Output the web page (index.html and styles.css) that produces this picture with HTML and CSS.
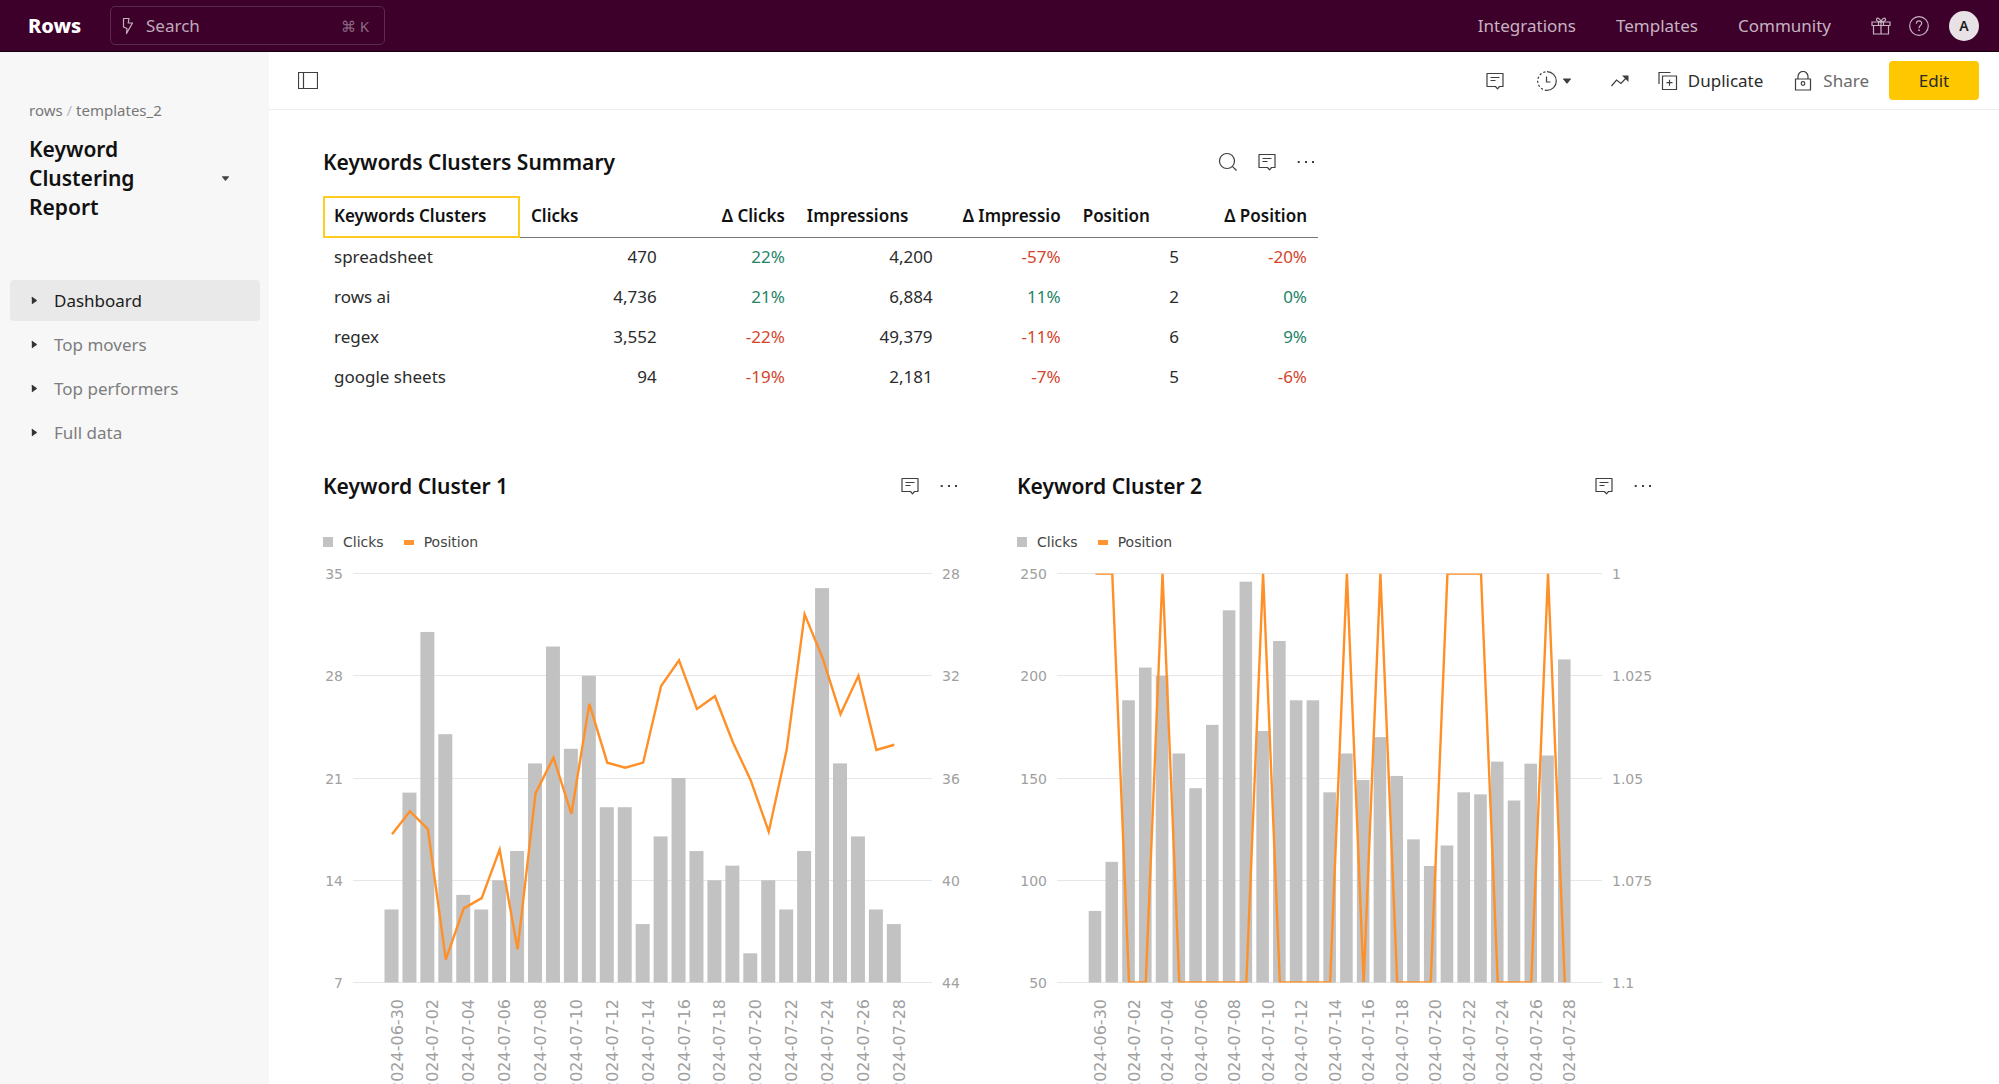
FILE: index.html
```html
<!DOCTYPE html>
<html lang="en">
<head>
<meta charset="utf-8">
<meta name="viewport" content="width=device-width, initial-scale=1">
<title>Keyword Clustering Report - Rows</title>
<link rel="stylesheet" href="styles.css">
</head>
<body>
<svg class="sprite" aria-hidden="true">
  <symbol id="i-comment" viewBox="0 0 20 20"><path d="M2 2.5h16v13h-3.500l-2 2.300-2-2.300H2z" stroke-linejoin="round"/><path d="M5.500 6.500h9M5.500 9.500h5"/></symbol>
  <symbol id="i-dots" viewBox="0 0 20 20"><path class="solid" d="M1.700 9h2v2h-2zM9 9h2v2H9zM16 9h2v2h-2z"/></symbol>
  <symbol id="i-search" viewBox="0 0 20 20"><circle cx="9" cy="9" r="7.500"/><path d="M14.300 14.300l4.200 4.200"/></symbol>
  <symbol id="i-down" viewBox="0 0 10 10"><path class="solid" d="M1.500 2.500h7q.8 0 .3.800L5.600 7.300q-.6.600-1.200 0L1.200 3.300q-.5-.8.300-.8z"/></symbol>
  <symbol id="i-right" viewBox="0 0 10 10"><path class="solid" d="M2 1.500v7q0 .8.700.4L7.400 5.500q.5-.5 0-1L2.700 1.100Q2 .7 2 1.500z"/></symbol>
</svg>

<header class="topbar">
  <a class="logo" href="#">Rows</a>
  <label class="search">
    <svg class="bolt" viewBox="0 0 12 18"><path d="M1.500 1.500h5.500L6.200 6h4.300L4.500 16.500 5 11.500 1.500 10z" stroke-linejoin="round"/></svg>
    <input type="search" placeholder="Search" aria-label="Search">
    <span class="shortcut">⌘ K</span>
  </label>
  <nav class="toplinks">
    <a href="#">Integrations</a>
    <a href="#">Templates</a>
    <a href="#">Community</a>
  </nav>
  <div class="account">
    <button class="icon-btn" aria-label="What's new"><svg viewBox="0 0 20 20"><path d="M1 6h18v3.500H1zM2.500 9.500V18h15V9.500M10 6v12M7.500 6v3.500M12.500 6v3.500"/><path d="M10 6C9 2 5.500 1 5.500 3.500c0 1.500 2 2.200 4.500 2.500 2.500-.3 4.500-1 4.500-2.500C14.500 1 11 2 10 6z"/></svg></button>
    <button class="icon-btn" aria-label="Help"><svg viewBox="0 0 20 20"><circle cx="10" cy="10" r="9.300"/><path d="M7.300 7.800C7.300 3.700 13 4.200 12.700 7.500c-.2 2-2.700 2-2.700 4.700"/><path class="solid" d="M9.200 13.500h1.600v1.600H9.200z"/></svg></button>
    <button class="avatar" aria-label="Account">A</button>
  </div>
</header>

<div class="app">
  <aside class="sidebar">
    <p class="crumbs"><a href="#">rows</a> <span>/</span> <a href="#">templates_2</a></p>
    <div class="report">
      <h1>Keyword Clustering Report</h1>
      <button class="caret-btn" aria-label="Report menu"><svg><use href="#i-down"/></svg></button>
    </div>
    <nav class="pages">
      <a class="current" href="#"><svg><use href="#i-right"/></svg>Dashboard</a>
      <a href="#"><svg><use href="#i-right"/></svg>Top movers</a>
      <a href="#"><svg><use href="#i-right"/></svg>Top performers</a>
      <a href="#"><svg><use href="#i-right"/></svg>Full data</a>
    </nav>
  </aside>

  <main class="main">
    <div class="toolbar">
      <button class="icon-btn" aria-label="Toggle sidebar"><svg viewBox="0 0 20 20"><path d="M.5 1.500h19v16H.5zM5.500 1.500v16"/></svg></button>
      <div class="actions">
        <button class="icon-btn" aria-label="Comments"><svg><use href="#i-comment"/></svg></button>
        <button class="history" aria-label="Version history"><svg viewBox="0 0 20 20"><path d="M10 .7a9.300 9.300 0 0 1 0 18.600"/><path d="M10 19.300A9.300 9.300 0 0 1 10 .7" stroke-dasharray="2.200 2"/><path d="M9.500 5.500v5.500h4"/></svg><svg class="caret"><use href="#i-down"/></svg></button>
        <button class="icon-btn trend" aria-label="Insights"><svg viewBox="0 0 20 20"><path d="M1.500 15l5-6 4.500 3.500L17 6"/><path class="solid" d="M12 4.500h6.500V11z"/></svg></button>
        <button class="text-btn"><svg viewBox="0 0 20 20"><path d="M1 13V1.500h11.500"/><path d="M4.500 5h14v13.500h-14zM11.500 8.700v6M8.500 11.700h6"/></svg>Duplicate</button>
        <button class="text-btn share"><svg viewBox="0 0 20 20"><path d="M2.500 8h15v11h-15zM5 8V5.500a5 5 0 0 1 10 0V8"/><circle cx="10" cy="12.500" r="1.800"/></svg>Share</button>
        <button class="edit">Edit</button>
      </div>
    </div>

    <div class="canvas">
      <section class="widget summary">
        <div class="widget-head">
          <h2>Keywords Clusters Summary</h2>
          <button class="icon-btn" aria-label="Search table"><svg><use href="#i-search"/></svg></button>
          <button class="icon-btn" aria-label="Comment"><svg><use href="#i-comment"/></svg></button>
          <button class="icon-btn" aria-label="More"><svg><use href="#i-dots"/></svg></button>
        </div>
        <table>
          <colgroup><col class="c-name"><col class="c-val"><col class="c-delta"><col class="c-val"><col class="c-delta"><col class="c-pos"><col class="c-delta"></colgroup>
          <thead>
            <tr><th class="selected">Keywords Clusters</th><th>Clicks</th><th class="num">Δ Clicks</th><th>Impressions</th><th class="num">Δ Impressio</th><th>Position</th><th class="num">Δ Position</th></tr>
          </thead>
          <tbody>
            <tr><td>spreadsheet</td><td class="num">470</td><td class="num up">22%</td><td class="num">4,200</td><td class="num down">-57%</td><td class="num">5</td><td class="num down">-20%</td></tr>
            <tr><td>rows ai</td><td class="num">4,736</td><td class="num up">21%</td><td class="num">6,884</td><td class="num up">11%</td><td class="num">2</td><td class="num up">0%</td></tr>
            <tr><td>regex</td><td class="num">3,552</td><td class="num down">-22%</td><td class="num">49,379</td><td class="num down">-11%</td><td class="num">6</td><td class="num up">9%</td></tr>
            <tr><td>google sheets</td><td class="num">94</td><td class="num down">-19%</td><td class="num">2,181</td><td class="num down">-7%</td><td class="num">5</td><td class="num down">-6%</td></tr>
          </tbody>
        </table>
      </section>

      <div class="charts">
        <section class="widget">
          <div class="widget-head">
            <h2>Keyword Cluster 1</h2>
            <button class="icon-btn" aria-label="Comment"><svg><use href="#i-comment"/></svg></button>
            <button class="icon-btn" aria-label="More"><svg><use href="#i-dots"/></svg></button>
          </div>
          <ul class="legend"><li class="bar">Clicks</li><li class="line">Position</li></ul>
          <svg class="chart" id="cluster1" viewBox="0 0 638 560" role="img" aria-label="Clicks and position, cluster 1"></svg>
        </section>
        <section class="widget">
          <div class="widget-head">
            <h2>Keyword Cluster 2</h2>
            <button class="icon-btn" aria-label="Comment"><svg><use href="#i-comment"/></svg></button>
            <button class="icon-btn" aria-label="More"><svg><use href="#i-dots"/></svg></button>
          </div>
          <ul class="legend"><li class="bar">Clicks</li><li class="line">Position</li></ul>
          <svg class="chart" id="cluster2" viewBox="0 0 638 560" role="img" aria-label="Clicks and position, cluster 2"></svg>
        </section>
      </div>
    </div>
  </main>
</div>
<script src="charts.js"></script>
</body>
</html>
```

FILE: styles.css
```css
* { box-sizing: border-box; }

body {
  margin: 0;
  height: 100vh;
  display: flex;
  flex-direction: column;
  overflow: hidden;
  font-family: "Noto Sans", "Liberation Sans", sans-serif;
  font-size: 17px;
  line-height: 24px;
  color: #2b2b2b;
  background: #fff;
}

h1, h2, p, ul { margin: 0; padding: 0; }
a { color: inherit; text-decoration: none; }
button, input { font: inherit; color: inherit; background: none; border: 0; padding: 0; }
button { cursor: pointer; }

svg { display: block; flex: none; fill: none; stroke: currentColor; stroke-width: 1.2; }
.solid { fill: currentColor; stroke: none; }
.sprite { position: absolute; width: 0; height: 0; }

.icon-btn { width: 24px; height: 24px; display: grid; place-items: center; color: #3f3f3f; }
.icon-btn svg { width: 20px; height: 20px; }

/* Top bar */
.topbar {
  flex: none;
  height: 52px;
  display: flex;
  align-items: center;
  padding: 0 20px 0 28px;
  background: #3d002b;
  border-bottom: 1px solid #17000f;
  color: #c6b3c0;
}
.logo { width: 82px; font-size: 20px; font-weight: 800; color: #fff; }
.search {
  width: 275px;
  height: 39px;
  display: flex;
  align-items: center;
  gap: 12px;
  padding: 0 15px 0 11px;
  border: 1px solid #5b2a4c;
  border-radius: 5px;
}
.search input { flex: 1; min-width: 0; outline: 0; }
.search input::placeholder { color: #c0aaba; opacity: 1; }
.bolt { width: 12px; height: 18px; }
.shortcut { font-size: 15px; color: #8d6b81; }
.toplinks { margin-left: auto; display: flex; gap: 40px; }
.account { display: flex; align-items: center; gap: 14px; margin-left: 38px; }
.account .icon-btn { color: #c6b3c0; }
.avatar {
  width: 30px;
  height: 30px;
  margin-left: 4px;
  border-radius: 50%;
  background: #e8e1e6;
  color: #1c1c1c;
  font-size: 14px;
  font-weight: 600;
}

.app { flex: 1; min-height: 0; display: flex; }

/* Sidebar */
.sidebar { flex: none; width: 269px; padding: 46px 9px 0 10px; background: #f7f7f7; }
.crumbs { padding-left: 19px; font-size: 15px; color: #777; }
.crumbs span { color: #bbb; }
.report { display: flex; align-items: center; justify-content: space-between; padding: 13px 30px 0 19px; }
.report h1 { width: 140px; font-size: 21px; line-height: 29px; font-weight: 600; color: #111; }
.caret-btn svg { width: 9px; height: 9px; color: #444; }
.pages { display: grid; gap: 3px; margin-top: 58px; }
.pages a { height: 41px; display: flex; align-items: center; gap: 15px; padding-left: 20px; border-radius: 4px; color: #7d7d7d; }
.pages svg { width: 9px; height: 9px; color: #333; }
.pages .current { background: #e9e9e9; color: #1c1c1c; }

/* Page toolbar */
.main { flex: 1; min-width: 0; overflow: auto; scrollbar-width: none; }
.toolbar {
  height: 58px;
  display: flex;
  align-items: center;
  justify-content: space-between;
  padding: 0 20px 0 27px;
  border-bottom: 1px solid #eee;
}
.actions { display: flex; align-items: center; color: #3f3f3f; }
.history { display: flex; align-items: center; gap: 5px; margin: 0 36px 0 30px; }
.history svg { width: 20px; height: 20px; }
.history .caret { width: 10px; height: 10px; }
.trend { margin-right: 26px; }
.text-btn { display: flex; align-items: center; gap: 10px; margin-right: 30px; color: #2b2b2b; }
.text-btn svg { width: 20px; height: 20px; color: #3f3f3f; }
.share { margin-right: 20px; color: #6a6a6a; }
.edit { width: 90px; height: 39px; border-radius: 4px; background: #ffc700; color: #2b2b2b; }

/* Widgets */
.canvas { padding: 30px 54px 40px; }
.widget-head { height: 44px; display: flex; align-items: center; gap: 15px; }
.widget-head h2 { flex: 1; font-size: 21px; font-weight: 600; color: #111; }
.summary { max-width: 995px; }

table { width: 100%; margin-top: 12px; table-layout: fixed; border-collapse: separate; border-spacing: 0; }
th, td { height: 40px; padding: 0 11px 3px; text-align: left; white-space: nowrap; }
th { height: 42px; padding: 0 11px 2px; font-weight: 600; color: #111; border-bottom: 1px solid #777; }
th.selected { border-bottom-color: #fc2; box-shadow: inset 2px 2px #fc2, inset -2px -1px #fc2; }
.num { text-align: right; }
.up { color: #258366; }
.down { color: #d3452b; }
.c-name { width: 20%; }
.c-val { width: 15%; }
.c-delta { width: 13%; }
.c-pos { width: 12%; }

.charts {
  max-width: 1332px;
  display: grid;
  grid-template-columns: 1fr 1fr;
  gap: 56px;
  margin-top: 66px;
}
.legend { display: flex; gap: 20px; margin-top: 24px; font-size: 14px; line-height: 20px; list-style: none; font-family: "DejaVu Sans", sans-serif; color: #444; }
.legend li { display: flex; align-items: center; gap: 10px; }
.legend li::before { content: ""; width: 10px; height: 10px; background: #c2c2c2; }
.legend .line::before { height: 5px; background: #ff9430; }

.chart { width: 100%; height: auto; }
.chart text { stroke: none; fill: #a0a0a0; font-family: "DejaVu Sans", sans-serif; font-size: 14px; }
.chart .date { font-size: 16px; text-anchor: end; }
.chart .left { text-anchor: end; }
.chart .grid { stroke: #e6e6e6; stroke-width: 1; }
.chart rect { stroke: none; fill: #c2c2c2; }
.chart polyline { stroke: #ff9028; stroke-width: 2.4; }
```

FILE: charts.js
```js
const NS = 'http://www.w3.org/2000/svg';
const TOP = 21.5;
const HEIGHT = 409;

function add(parent, name, attrs, text) {
  const el = document.createElementNS(NS, name);
  for (const key in attrs) el.setAttribute(key, attrs[key]);
  if (text !== undefined) el.textContent = text;
  parent.append(el);
  return el;
}

function draw(id, c) {
  const svg = document.getElementById(id);
  const y = (value, [top, bottom]) => TOP + (value - top) / (bottom - top) * HEIGHT;
  const x = i => c.first + i * c.step;

  c.left.forEach((label, i) => {
    const gy = Math.floor(TOP + i * HEIGHT / 4) + 0.5;
    add(svg, 'line', { class: 'grid', x1: c.x1, x2: c.x2, y1: gy, y2: gy });
    add(svg, 'text', { class: 'left', x: c.x1 - 10, y: gy + 5 }, label);
    add(svg, 'text', { x: c.x2 + 10, y: gy + 5 }, c.right[i]);
  });

  const leftRange = [c.left[0], c.left[4]];
  const rightRange = [c.right[0], c.right[4]];
  c.clicks.forEach((v, i) => {
    const top = y(v, leftRange);
    add(svg, 'rect', { x: x(i) - c.bar / 2, y: top, width: c.bar, height: TOP + HEIGHT - top });
  });

  const clip = add(svg, 'clipPath', { id: id + '-plot' });
  add(clip, 'rect', { x: c.x1, y: TOP, width: c.x2 - c.x1, height: HEIGHT });
  const points = c.position.map((v, i) => (x(i) + 0.5) + ',' + y(v, rightRange)).join(' ');
  add(svg, 'polyline', { points, 'clip-path': 'url(#' + id + '-plot)' });

  for (let i = 0; i < 29; i += 2) {
    const date = i ? '2024-07-' + String(i).padStart(2, '0') : '2024-06-30';
    const lx = x(i) + 11;
    add(svg, 'text', { class: 'date', transform: `translate(${lx} 447) rotate(-90)` }, date);
  }
}

draw('cluster1', {
  left: [35, 28, 21, 14, 7],
  right: [28, 32, 36, 40, 44],
  x1: 30, x2: 609, first: 68.5, step: 17.94, bar: 14,
  clicks: [12, 20, 31, 24, 13, 12, 14, 16, 22, 30, 23, 28, 19, 19, 11, 17, 21, 16, 14, 15, 9, 14, 12, 16, 34, 22, 17, 12, 11],
  position: [38.2, 37.3, 38, 43.1, 41.1, 40.7, 38.8, 42.7, 36.6, 35.2, 37.4, 33.1, 35.4, 35.6, 35.4, 32.4, 31.4, 33.3, 32.8, 34.6, 36.1, 38.1, 34.9, 29.6, 31.3, 33.5, 32, 34.9, 34.7]
});

draw('cluster2', {
  left: [250, 200, 150, 100, 50],
  right: [1, 1.025, 1.05, 1.075, 1.1],
  x1: 40, x2: 585, first: 78, step: 16.76, bar: 12.6,
  clicks: [85, 109, 188, 204, 200, 162, 145, 176, 232, 246, 173, 217, 188, 188, 143, 162, 149, 170, 151, 120, 107, 117, 143, 142, 158, 139, 157, 161, 208],
  position: [1, 1, 1.1, 1.1, 1, 1.1, 1.1, 1.1, 1.1, 1.1, 1, 1.1, 1.1, 1.1, 1.1, 1, 1.1, 1, 1.1, 1.1, 1.1, 1, 1, 1, 1.1, 1.1, 1.1, 1, 1.1]
});
```
